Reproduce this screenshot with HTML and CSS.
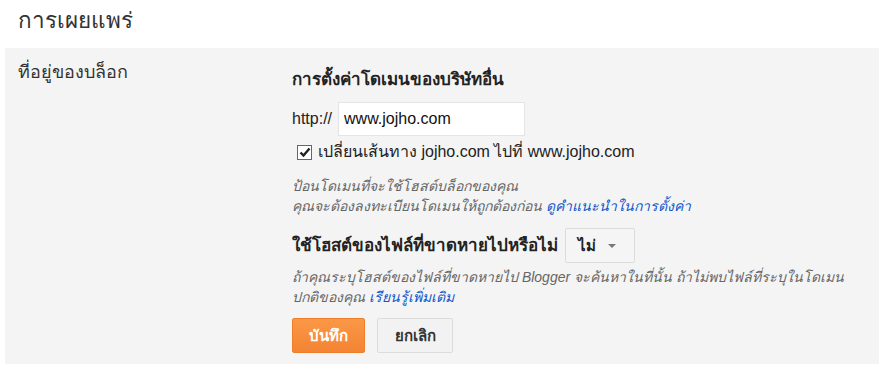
FILE: index.html
```html
<html lang="th">
<head>
    <meta charset="utf-8" />
    <title>การเผยแพร่</title>
    <link rel="stylesheet" href="styles.css">
</head>
<body>
    <h2 class="titulo">การเผยแพร่</h2>
    <div class="panel">
        <div class="etiqueta">ที่อยู่ของบล็อก</div>
        <div class="contenido">
            <h3 class="subtitulo">การตั้งค่าโดเมนของบริษัทอื่น</h3>
            <div class="fila-url">
                <span class="prefijo">http://</span>
                <input type="text" class="campo" value="www.jojho.com" />
            </div>
            <label class="redirigir">
                <span class="caja">
                    <svg width="12" height="11" viewBox="0 0 12 11"><path d="M1.5 5.5 L4.5 8.5 L10.5 1.5" fill="none" stroke="#222" stroke-width="2.4"/></svg>
                </span>
                เปลี่ยนเส้นทาง jojho.com ไปที่ www.jojho.com
            </label>
            <p class="ayuda">ป้อนโดเมนที่จะใช้โฮสต์บล็อกของคุณ<br>คุณจะต้องลงทะเบียนโดเมนให้ถูกต้องก่อน <a href="#">ดูคำแนะนำในการตั้งค่า</a></p>
            <div class="fila-host">
                <span class="pregunta">ใช้โฮสต์ของไฟล์ที่ขาดหายไปหรือไม่</span>
                <button class="selector">ไม่ <span class="flecha"></span></button>
            </div>
            <p class="ayuda">ถ้าคุณระบุโฮสต์ของไฟล์ที่ขาดหายไป Blogger จะค้นหาในที่นั้น ถ้าไม่พบไฟล์ที่ระบุในโดเมน<br>ปกติของคุณ <a href="#">เรียนรู้เพิ่มเติม</a></p>
            <div class="botones">
                <button class="guardar">บันทึก</button>
                <button class="cancelar">ยกเลิก</button>
            </div>
        </div>
    </div>
</body>
</html>
```
FILE: styles.css
```css
*
{
    margin: 0;
    padding: 0;
    box-sizing: border-box;
}

body
{
    font-family: "Liberation Sans", Arial, sans-serif;
    color: #222;
    background: white;
    padding: 0 5px;
}

.titulo
{
    font-size: 22.5px;
    line-height: 28px;
    font-weight: normal;
    color: #333;
    padding: 7px 0 0 13px;
    height: 48px;
}

.panel
{
    background: #f4f4f4;
    display: flex;
    padding: 14px 13px;
    height: 316px;
}

.etiqueta
{
    width: 274px;
    font-size: 18px;
    line-height: 20px;
    color: #333;
}

.contenido
{
    flex: 1;
    padding-top: 8px;
}

.subtitulo
{
    font-size: 17px;
    line-height: 20px;
    color: #222;
    margin-bottom: 12px;
}

.fila-url
{
    display: flex;
    align-items: center;
    gap: 6px;
    font-size: 16px;
    height: 34px;
}

.campo
{
    width: 187px;
    height: 34px;
    border: 1px solid #e4e4e4;
    background: white;
    font: 16px "Liberation Sans", Arial, sans-serif;
    color: #111;
    padding: 0 5px;
}

.redirigir
{
    display: flex;
    align-items: center;
    gap: 6px;
    font-size: 16px;
    line-height: 24px;
    height: 24px;
    margin: 4px 0 0 5px;
    color: #222;
}

.caja
{
    width: 15px;
    height: 15px;
    border: 1px solid #666;
    background: white;
    display: flex;
    align-items: center;
    justify-content: center;
}

.ayuda
{
    font-size: 14px;
    font-style: italic;
    color: #666;
    line-height: 20px;
    margin-top: 12px;
}

.ayuda a
{
    color: #15c;
    text-decoration: none;
}

.fila-host
{
    display: flex;
    align-items: center;
    gap: 7px;
    margin-top: 12px;
    height: 35px;
}

.pregunta
{
    font-size: 17px;
    line-height: 20px;
    font-weight: bold;
    color: #222;
}

.selector
{
    width: 70px;
    height: 35px;
    border: 1px solid #dcdcdc;
    border-radius: 2px;
    background: #f5f5f5;
    font: bold 15px "Liberation Sans", Arial, sans-serif;
    color: #222;
    display: flex;
    align-items: center;
    padding-left: 12px;
    gap: 12px;
}

.flecha
{
    width: 0;
    height: 0;
    border-left: 4px solid transparent;
    border-right: 4px solid transparent;
    border-top: 4px solid #777;
}

.fila-host + .ayuda
{
    margin-top: 4px;
}

.botones
{
    display: flex;
    gap: 12px;
    margin-top: 11px;
}

.guardar
{
    width: 73px;
    height: 35px;
    border: 1px solid #f07d2a;
    border-radius: 2px;
    background: linear-gradient(#fa9847, #f38433);
    color: white;
    font: bold 15px "Liberation Sans", Arial, sans-serif;
}

.cancelar
{
    width: 76px;
    height: 35px;
    border: 1px solid #dcdcdc;
    border-radius: 2px;
    background: #f2f2f2;
    color: #333;
    font: bold 15px "Liberation Sans", Arial, sans-serif;
}
```
